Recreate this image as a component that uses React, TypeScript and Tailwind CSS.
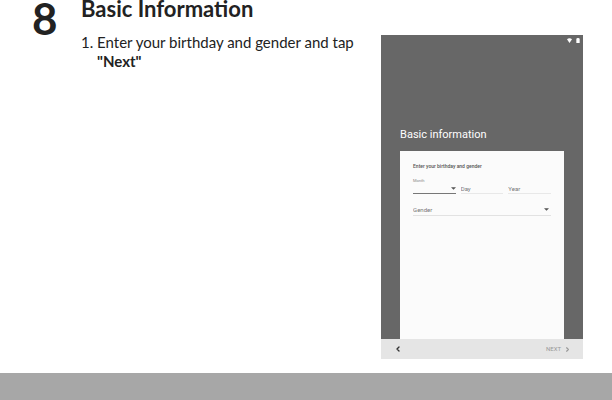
import { ChevronLeft, ChevronRight } from "lucide-react";

function Caret() {
  return (
    <svg viewBox="0 0 6 3" className="pointer-events-none h-[3px] w-[5px] shrink-0 fill-[#555555]" aria-hidden="true">
      <path d="M0 0h6L3 3z" />
    </svg>
  );
}

function StatusBar() {
  return (
    <div className="flex h-2 items-end justify-end gap-1 pr-[3px]">
      <svg viewBox="0 0 10 10" className="h-[5px] w-[5px] fill-white" aria-hidden="true">
        <path d="M0 2.5C3-.5 7-.5 10 2.5L5 10z" />
      </svg>
      <svg viewBox="0 0 8 12" className="h-[5px] w-1 fill-white" aria-hidden="true">
        <path d="M0 1h2V0h4v1h2v11H0z" />
      </svg>
    </div>
  );
}

const fieldText = "w-full min-w-0 appearance-none bg-transparent text-[6px] leading-2 text-[#777777] outline-none placeholder:text-[#777777]";

function DeviceScreen() {
  return (
    <section className="mt-[35px] flex h-81 w-[33vw] shrink-0 flex-col bg-[#676767] font-['Roboto',sans-serif]">
      <StatusBar />
      <div className="flex flex-1 flex-col px-[19px] pt-[82px]">
        <h2 className="pb-1.5 text-[11px] leading-5 whitespace-nowrap text-white">Basic information</h2>
        <form className="flex flex-1 flex-col bg-[#fbfbfb] px-[13px] pt-[11px]">
          <p className="text-[5px] leading-2 font-medium whitespace-nowrap text-[#555555]">Enter your birthday and gender</p>
          <div className="mt-[9px] flex items-end gap-[5px]">
            <div className="flex-1 border-b border-[#777777]">
              <label htmlFor="month" className="block text-[4px] leading-1 text-[#888888]">Month</label>
              <div className="flex h-2.5 items-center">
                <select id="month" className={fieldText}>
                  <option value=""></option>
                </select>
                <Caret />
              </div>
            </div>
            <div className="flex h-2.5 flex-1 items-center border-b border-[#e8e8e8]">
              <input aria-label="Day" placeholder="Day" className={fieldText} />
            </div>
            <div className="flex h-2.5 flex-1 items-center border-b border-[#e8e8e8]">
              <input aria-label="Year" placeholder="Year" className={fieldText} />
            </div>
          </div>
          <div className="mt-2.5 flex h-3 items-center border-b border-[#e2e2e2] pr-0.5">
            <select aria-label="Gender" className={fieldText}>
              <option>Gender</option>
            </select>
            <Caret />
          </div>
        </form>
      </div>
      <div className="flex h-5 items-center justify-between bg-[#e5e5e5] pr-3 pl-[13px]">
        <button type="button" aria-label="Back" className="text-[#333333]">
          <ChevronLeft size={8} strokeWidth={4} />
        </button>
        <button type="button" className="flex items-center gap-[3px] text-[6px] leading-2 text-[#999999]">
          NEXT
          <ChevronRight size={7} strokeWidth={4} />
        </button>
      </div>
    </section>
  );
}

export default function App() {
  return (
    <main className="flex min-h-screen flex-col bg-white font-['Lato',sans-serif] text-[#222222] antialiased">
      <div className="flex flex-1 items-start pr-[29px] pb-3.5 pl-8">
        <div className="w-[49px] shrink-0 text-[44px] leading-9 font-bold">8</div>
        <div className="min-w-0 flex-1">
          <h1 className="text-[22px] leading-[18px] font-bold">Basic Information</h1>
          <ol className="mt-[15px] list-none text-[15px] leading-[19px]">
            <li className="pl-4 -indent-4">
              1. Enter your birthday and gender and tap <strong className="block indent-0">"Next"</strong>
            </li>
          </ol>
        </div>
        <DeviceScreen />
      </div>
      <footer className="h-[27px] bg-[#a7a7a7]" />
    </main>
  );
}
